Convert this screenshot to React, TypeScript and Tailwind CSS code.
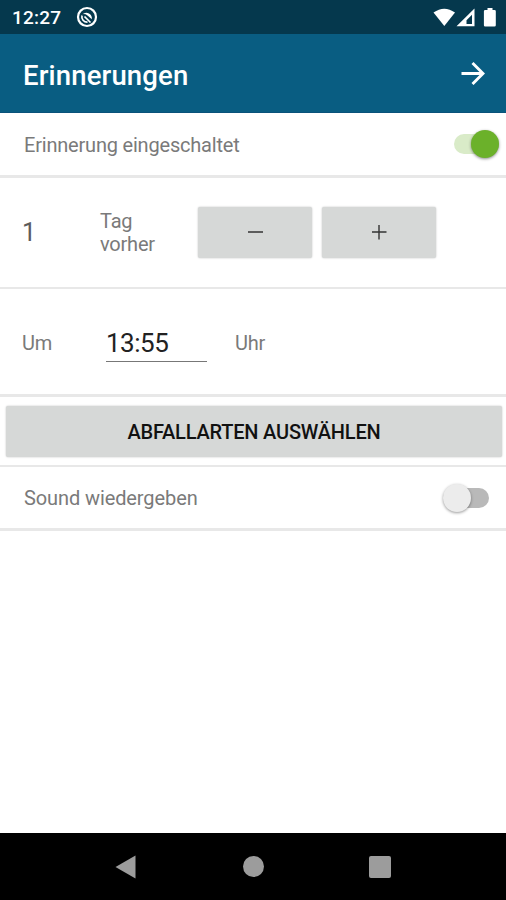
import type { ReactNode } from "react";

type RowProps = {
  className?: string;
  children: ReactNode;
};

function Row({ className = "", children }: RowProps) {
  return (
    <div className={`flex items-center border-[#e8e8e8] ${className}`}>
      {children}
    </div>
  );
}

function StatusBar() {
  return (
    <div className="flex h-[34px] shrink-0 items-center bg-[#05384d] text-white">
      <span className="ml-3 w-[64px] text-[19px] font-medium leading-none tracking-[0.2px]">
        12:27
      </span>
      <svg className="size-[22px]" viewBox="0 0 22 22" fill="none">
        <circle cx="11" cy="11" r="9" stroke="white" strokeWidth="2.2" />
        <path
          d="M6.5 8.2A5.6 5.6 0 0 1 15.8 13.2L11.5 9.5Q9 7.500 6.500 8.200Z"
          fill="white"
        />
        <path
          d="M6 9.5A5.400 5.400 0 0 0 11.500 16.200M8.500 10.500L14.500 16.500"
          stroke="white"
          strokeWidth="1.7"
        />
      </svg>
      <svg
        className="ml-auto mr-[8px] h-5 w-[65px]"
        viewBox="0 0 65 20"
        fill="white"
      >
        <path d="M0.5 5.5Q11.3 -2.2 22 5.5L11.3 19Z" />
        <path
          fillRule="evenodd"
          d="M23.5 19.3L41.5 1.5V19.3ZM33.5 17H39V7.800L33.5 13.3Z"
        />
        <path d="M54.5 1h5v2h2a1.3 1.3 0 0 1 1.3 1.3v13.9a1.3 1.3 0 0 1-1.3 1.3h-9.3a1.3 1.3 0 0 1-1.3-1.3V4.3a1.3 1.3 0 0 1 1.3-1.3H54.5Z" />
      </svg>
    </div>
  );
}

function Header() {
  return (
    <header className="flex h-[79px] shrink-0 items-center justify-between border-b border-[#0a527a] bg-[#095d82] pl-[23px] pr-[21px] text-white">
      <h1 className="text-[27.5px] font-medium leading-none tracking-[0.15px] translate-y-[3px]">
        Erinnerungen
      </h1>
      <svg className="size-6" viewBox="0 0 24 24" fill="none">
        <path
          d="M0.5 12.5H21.5M11.5 2L22 12.5L11.5 23"
          stroke="white"
          strokeWidth="2.9"
        />
      </svg>
    </header>
  );
}

function Switch({ on = false }: { on?: boolean }) {
  if (on) {
    return (
      <div className="flex h-5 w-[45px] items-center justify-end rounded-full bg-[#d9ebc8]">
        <div className="size-7 shrink-0 rounded-full bg-[#6bb12a] shadow-[0_1px_3px_rgba(0,0,0,0.45)]" />
      </div>
    );
  }
  return (
    <div className="flex h-5 w-[46px] items-center rounded-full bg-[#b9b9b9]">
      <div className="size-7 shrink-0 rounded-full bg-[#ececec] shadow-[0_1px_3px_rgba(0,0,0,0.4)]" />
    </div>
  );
}

const button =
  "flex h-[51px] items-center justify-center rounded-[2px] bg-[#d6d8d7] shadow-[0_0_2px_rgba(0,0,0,0.25)]";

export default function App() {
  return (
    <div className="flex h-[900px] w-[506px] flex-col overflow-hidden bg-white font-[Roboto,sans-serif] text-[#7a7a7a]">
      <StatusBar />
      <Header />
      <main className="flex-1 text-[20px] tracking-[-0.2px]">
        <Row className="h-[65px] justify-between border-b-3 pl-6 pr-[7px]">
          <span className="translate-y-px">Erinnerung eingeschaltet</span>
          <Switch on />
        </Row>
        <Row className="h-[111px] border-b-2 pl-[22px]">
          <span className="w-[78px] text-[25px] text-[#5c5c5c]">1</span>
          <span className="w-[98px] leading-[23px]">
            Tag
            <br />
            vorher
          </span>
          <button className={`${button} w-[114px]`}>
            <svg className="size-[15px]" viewBox="0 0 15 15">
              <path d="M0 7H15" stroke="#333" strokeWidth="1.5" />
            </svg>
          </button>
          <button className={`${button} ml-[10px] w-[114px]`}>
            <svg className="size-[15px]" viewBox="0 0 15 15">
              <path d="M0 7H14.5M7 0V14.5" stroke="#333" strokeWidth="1.4" />
            </svg>
          </button>
        </Row>
        <Row className="h-[108px] border-b-3 pl-[22px]">
          <span className="w-[84px] translate-y-px">Um</span>
          <span className="flex h-[39px] w-[101px] translate-y-px items-center border-b border-[#777] pt-[2px] text-[26px] tracking-[-0.5px] text-[#222]">
            13:55
          </span>
          <span className="ml-7 translate-y-px">Uhr</span>
        </Row>
        <Row className="h-[70px] border-b-2 pl-[6px] pr-[4px]">
          <button
            className={`${button} w-full pt-[2px] text-[20px] font-medium text-[#111]`}
          >
            ABFALLARTEN AUSWÄHLEN
          </button>
        </Row>
        <Row className="h-[64px] justify-between border-b-3 pl-6 pr-[17px]">
          <span className="tracking-[-0.1px]">Sound wiedergeben</span>
          <Switch />
        </Row>
      </main>
      <nav className="flex h-[67px] shrink-0 items-center bg-black pl-[115px]">
        <svg className="h-6 w-[21px]" viewBox="0 0 21 24" fill="#9c9c9c">
          <path d="M0.5 12L20.5 0.5V23.5Z" />
        </svg>
        <div className="ml-[107px] size-[21px] rounded-full bg-[#9c9c9c]" />
        <div className="ml-[105px] size-[22px] rounded-[2px] bg-[#9c9c9c]" />
      </nav>
    </div>
  );
}
